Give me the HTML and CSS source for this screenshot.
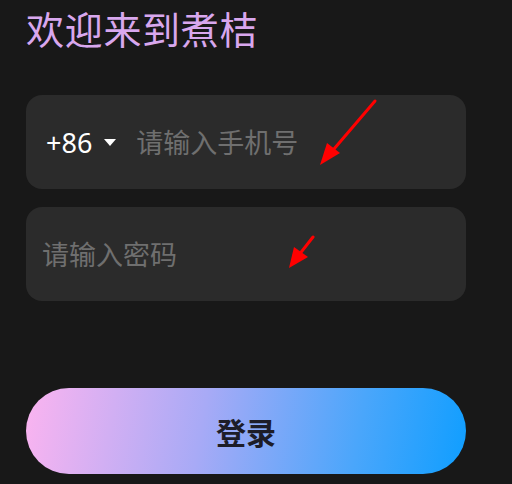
FILE: index.html
```html
<!DOCTYPE html>
<html lang="zh">
<head>
<meta charset="utf-8">
<link rel="stylesheet" href="styles.css">
</head>
<body>
<main class="page">
  <h1 class="title">欢迎来到煮桔</h1>
  <div class="form">
    <div class="field">
      <span class="code">+86</span>
      <span class="caret"></span>
      <span class="placeholder">请输入手机号</span>
    </div>
    <div class="field">
      <span class="placeholder">请输入密码</span>
    </div>
  </div>
  <button class="login">登录</button>
  <svg class="annot" width="512" height="484" viewBox="0 0 512 484">
    <line x1="375" y1="101" x2="328" y2="156" stroke="#ff0000" stroke-width="3" stroke-linecap="round"/>
    <polygon points="320,165 327,143 340,153" fill="#ff0000"/>
    <line x1="313" y1="237" x2="295" y2="260" stroke="#ff0000" stroke-width="3" stroke-linecap="round"/>
    <polygon points="289,268 294,247 308,257" fill="#ff0000"/>
  </svg>
</main>
</body>
</html>
```
FILE: styles.css
```css
html, body {
  margin: 0;
  padding: 0;
  background: #181818;
}
body {
  font-family: "Noto Sans", "Noto Sans CJK SC", sans-serif;
}
.page {
  position: relative;
  width: 512px;
  height: 484px;
  box-sizing: border-box;
  padding: 0 46px 0 26px;
  overflow: hidden;
}
.title {
  margin: 0;
  padding-top: 6px;
  font-size: 38px;
  line-height: 46px;
  font-weight: 400;
  color: #d8a7ee;
  letter-spacing: 0.7px;
}
.form {
  margin-top: 43px;
  display: flex;
  flex-direction: column;
  gap: 18px;
}
.field {
  height: 94px;
  background: #2b2b2b;
  border-radius: 16px;
  display: flex;
  align-items: center;
  padding: 0 16px 0 20px;
}
.field:nth-child(2) {
  padding-left: 16px;
}
.code {
  color: #ffffff;
  font-size: 27px;
  line-height: 1;
}
.caret {
  width: 0;
  height: 0;
  border-left: 6.5px solid transparent;
  border-right: 6.5px solid transparent;
  border-top: 7px solid #ffffff;
  margin: 0 20px 0 12px;
}
.placeholder {
  color: #6f6f6f;
  font-size: 27px;
  line-height: 1;
}
.login {
  display: flex;
  align-items: center;
  justify-content: center;
  margin-top: 87px;
  width: 440px;
  height: 86px;
  border: none;
  border-radius: 43px;
  background: linear-gradient(100deg, #fbb4f0 0%, #a8aaf6 40%, #4aa6fb 75%, #0f9eff 100%);
  font-family: "Noto Sans CJK SC", sans-serif;
  font-size: 30px;
  font-weight: 700;
  color: #1d1d28;
  padding: 0;
}
.annot {
  position: absolute;
  left: 0;
  top: 0;
  pointer-events: none;
}
```
